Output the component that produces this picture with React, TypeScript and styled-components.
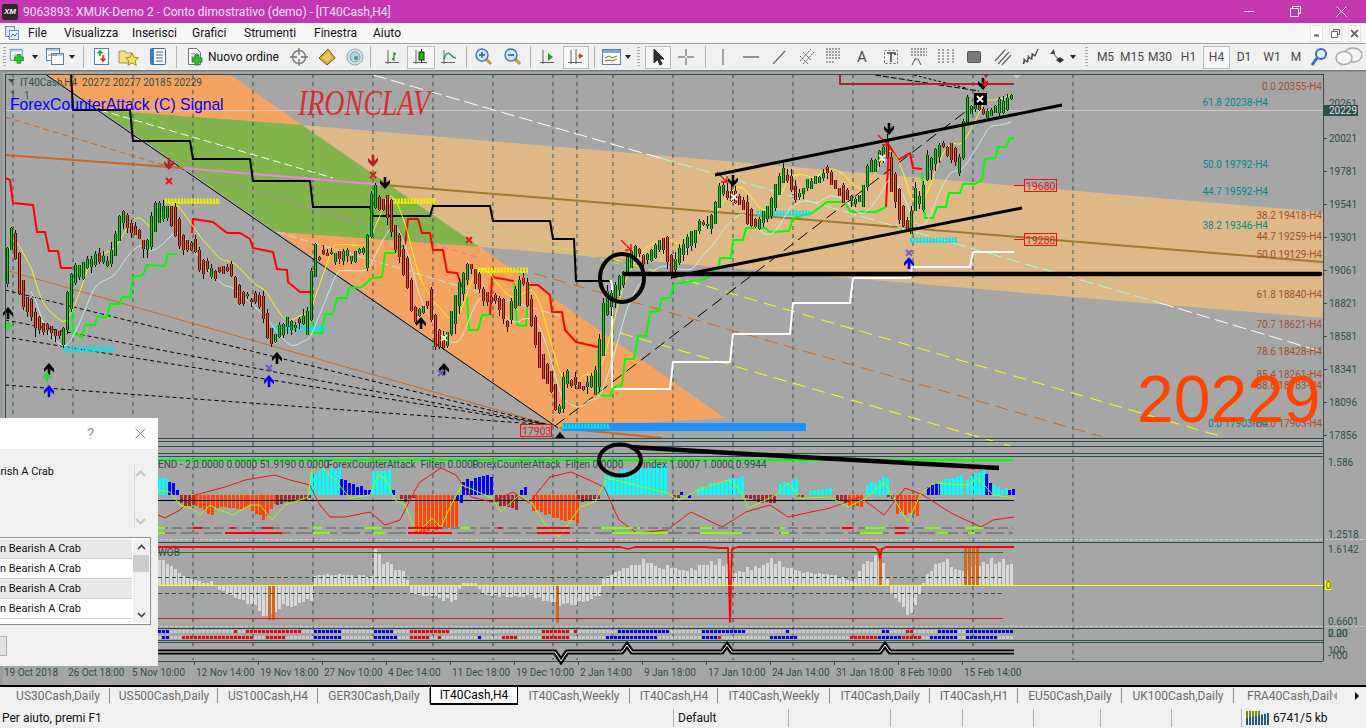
import React from "react";
import styled, { createGlobalStyle } from "styled-components";

const Global = createGlobalStyle`
  html, body { margin: 0; padding: 0; width: 1366px; height: 728px; overflow: hidden; background: #f0f0f0; }
  * { box-sizing: border-box; }
`;
const UI = `Roboto, "Liberation Sans", Arial, sans-serif`;
const ARIAL = `"Liberation Sans", Arial, sans-serif`;

const Page = styled.div`
  width: 1366px; height: 728px; display: flex; flex-direction: column;
  font-family: ${UI}; font-size: 12px; color: #000; overflow: hidden;
`;
const TitleBar = styled.header`
  height: 23px; background: #c437b0; display: flex; align-items: center; color: #fff; flex-shrink: 0; padding-right: 2px;
`;
const AppLogo = styled.div`
  width: 16px; height: 16px; margin: 0 5px 0 2px; background: #2a2a2a; border-radius: 2px; color: #fff;
  font: italic bold 8px ${ARIAL}; display: flex; align-items: center; justify-content: center;
`;
const TitleText = styled.div`
  flex: 1; font-size: 12px; color: #f4e4f2;
`;
const WinButton = styled.div`
  width: 46px; height: 21px; display: flex; align-items: center; justify-content: center;
`;
const MenuBar = styled.nav`
  height: 20px; background: #f7f7f7; display: flex; align-items: center; flex-shrink: 0;
`;
const MenuIcon = styled.div`
  width: 28px; padding-left: 4px; display: flex; align-items: center;
`;
const MenuItem = styled.span<{ $w: number }>`
  width: ${(p) => p.$w}px; font-size: 12px; color: #111;
`;
const MdiGroup = styled.div`
  margin-left: auto; display: flex; gap: 6px; padding-right: 5px;
`;
const MdiButton = styled.div`
  width: 13px; height: 17px; background: #fff; border: 1px solid #e4e4e4; display: flex; align-items: center; justify-content: center;
`;
const Toolbar = styled.div`
  height: 27px; background: #f0f0f0; border-top: 1px solid #a0a0a0; display: flex; align-items: center; flex-shrink: 0;
`;
const ToolSlot = styled.div<{ $w: number; $pressed?: boolean; $big?: boolean }>`
  width: ${(p) => p.$w}px; height: 23px; flex-shrink: 0; display: flex; align-items: center; justify-content: center;
  background: ${(p) => (p.$pressed ? "#f8f8f8" : "transparent")};
  border: 1px solid ${(p) => (p.$pressed ? "#bcbcbc" : "transparent")};
  font-size: ${(p) => (p.$big ? 15 : 12)}px; color: #4a4a4a; gap: 3px; white-space: nowrap;
`;
const OrderLabel = styled.span`
  color: #111; font-size: 12px;
`;
const Separator = styled.div`
  width: 1px; height: 22px; background: #b4b4b4;
`;
const Grip = styled.div`
  width: 3px; height: 20px;
  background: repeating-linear-gradient(to bottom, #a8a8a8 0 1px, transparent 1px 3px);
`;
const Caret = styled.div`
  width: 0; height: 0; border-left: 3px solid transparent; border-right: 3px solid transparent; border-top: 4px solid #222;
`;
const ChartArea = styled.main`
  position: relative; height: 615px; flex-shrink: 0; background: #a6a6a6; border-top: 1px solid #f0f0f0;
`;
const ChartCanvas = styled.svg`
  display: block; position: absolute; left: 0; top: -1px; width: 1366px; height: 615px;
`;
const AxisText = styled.text`
  font: 10px ${UI}; fill: #2f4f4f;
`;
const HeaderText = styled.text`
  font: 10px ${UI}; fill: #2f4f4f; white-space: pre;
`;
const SignalText = styled.text`
  font: 15.7px ${ARIAL}; fill: #0000ff;
`;
const FibText = styled.text<{ $teal?: boolean }>`
  font: 10px ${UI}; fill: ${(p) => (p.$teal ? "#008b8b" : "#a0522d")}; text-anchor: end;
`;
const PriceBoxText = styled.text`
  font: 10.5px ${UI}; fill: #e02020;
`;
const BigPrice = styled.text`
  font: 66px ${ARIAL}; fill: #ff4500;
`;
const ScrawlText = styled.text`
  font: italic 35px "Liberation Serif", serif; fill: #e01010; fill-opacity: .8;
`;
const Dialog = styled.aside`
  position: absolute; left: 0; top: 347px; width: 158px; height: 248px; background: #f0f0f0; display: flex; flex-direction: column;
`;
const DialogTitle = styled.div`
  height: 31px; background: #fff; display: flex; align-items: center; justify-content: flex-end; flex-shrink: 0; color: #8a8a8a;
`;
const HelpGlyph = styled.span`
  width: 49px; font-size: 15px; text-align: left; color: #9a9a9a;
`;
const CloseGlyph = styled.div`
  width: 23px; padding-right: 12px; display: flex; margin-left: -1px;
`;
const MessageRow = styled.div`
  height: 88px; display: flex; flex-shrink: 0;
`;
const MessageText = styled.div`
  width: 134px; padding: 16px 80px 0 0; display: flex; justify-content: flex-end; overflow: hidden; white-space: nowrap; font-size: 11px; color: #111;
`;
const MessageScroll = styled.div`
  width: 12px; margin-top: 15px; height: 65px; border-left: 1px solid #dcdcdc; display: flex; flex-direction: column; justify-content: space-between; align-items: center; padding: 6px 0 4px;
`;
const ListBox = styled.div`
  width: 151px; height: 88px; border: 1px solid #8c8c8c; border-left: 0; display: flex; background: #fff; flex-shrink: 0;
`;
const ListRows = styled.div`
  width: 132px; padding-top: 1px;
`;
const ListRow = styled.div<{ $odd: boolean }>`
  height: 20px; padding-right: 51px; display: flex; justify-content: flex-end; align-items: center; overflow: hidden; white-space: nowrap;
  font-size: 11px; color: #111; background: ${(p) => (p.$odd ? "#e9e9e9" : "#fff")}; border-bottom: 1px solid #cfcfcf;
`;
const ListScroll = styled.div`
  flex: 1; background: #f0f0f0; margin: 1px; display: flex; flex-direction: column; align-items: center; justify-content: space-between; padding: 5px 0;
`;
const ListThumb = styled.div`
  width: 100%; height: 17px; background: #cdcdcd; margin-bottom: auto; margin-top: 5px;
`;
const DialogButton = styled.div`
  width: 7px; height: 20px; margin-top: 11px; background: #e1e1e1; border: 1px solid #adadad; border-left: 0;
`;
const TabBar = styled.div`
  height: 21px; background: #f0f0f0; border-top: 2px solid #000; display: flex; align-items: flex-start; flex-shrink: 0; position: relative; padding-left: 6px;
`;
const Tab = styled.div<{ $active?: boolean; $w: number }>`
  width: ${(p) => p.$w}px; height: ${(p) => (p.$active ? 20 : 15)}px; margin-top: ${(p) => (p.$active ? "-2px" : "1px")}; flex-shrink: 0;
  display: flex; align-items: center; justify-content: center; white-space: nowrap; overflow: hidden;
  color: ${(p) => (p.$active ? "#000" : "#6b6b6b")}; background: ${(p) => (p.$active ? "#fff" : "transparent")};
  border-left: 1px solid ${(p) => (p.$active ? "#000" : "transparent")};
  border-right: 1px solid ${(p) => (p.$active ? "#000" : "#8a8a8a")};
  border-bottom: ${(p) => (p.$active ? "2px solid #000" : "0")};
  border-top: ${(p) => (p.$active ? "2px solid #000" : "0")};
  font-size: 12px;
`;
const LastTab = styled(Tab)`
  justify-content: flex-start; padding-left: 12px; border-right: 0;
`;
const TabArrows = styled.div`
  position: absolute; right: 7px; top: 1px; width: 26px; height: 15px; display: flex; justify-content: space-between; align-items: center; background: #f0f0f0;
`;
const TabArrow = styled.div<{ $dir: "l" | "r"; $on?: boolean }>`
  width: 0; height: 0; border-top: 4px solid transparent; border-bottom: 4px solid transparent;
  ${(p) => (p.$dir === "l" ? `border-right: 4px solid ${p.$on ? "#000" : "#a0a0a0"};` : `border-left: 4px solid ${p.$on ? "#000" : "#a0a0a0"};`)}
`;
const StatusBar = styled.footer`
  height: 22px; background: #f0f0f0; display: flex; align-items: center; flex-shrink: 0; font-size: 12px; color: #111; padding-top: 2px;
`;
const StatusCell = styled.div<{ $w: number; $plain?: boolean }>`
  width: ${(p) => p.$w}px; height: 18px; flex-shrink: 0; padding-left: ${(p) => (p.$plain ? 2 : 4)}px; display: flex; align-items: center; gap: 4px; white-space: nowrap;
  border-left: ${(p) => (p.$plain ? "0" : "1px solid #b0b0b0")};
`;

/* ---------- toolbar icons ---------- */
const Ico = ({ children, w = 18, h = 18 }: { children: React.ReactNode; w?: number; h?: number }) => (
  <svg width={w} height={h} viewBox={`0 0 ${w} ${h}`}>{children}</svg>
);
const Win = ({ x = 1, y = 1, w = 13, h = 12 }: any) => (
  <>
    <rect x={x + 0.5} y={y + 0.5} width={w} height={h} fill="#fff" stroke="#5f7f9f" />
    <rect x={x + 1} y={y + 1} width={w - 1} height={2} fill="#b5cbe6" />
  </>
);
const Plus = ({ x = 9, y = 9 }: any) => (
  <path d={`M${x + 3} ${y}h4v3h3v4h-3v3h-4v-3h-3v-4h3z`} transform="translate(-1 -1)" fill="#30c030" stroke="#0c7a0c" strokeWidth=".8" />
);
const AxisL = ({ children }: { children?: React.ReactNode }) => (
  <Ico>
    <path d="M4 2v14M1 14.5h14" stroke="#606060" fill="none" />
    {children}
  </Ico>
);
const icons: Record<string, React.ReactNode> = {
  newChart: <Ico w={20} h={20}><Win /><path d="M4 8h8M7 6v5" stroke="#7a9a" /><Plus x={7} y={8} /></Ico>,
  profile: <Ico w={20} h={20}><Win x={1} y={1} /><Win x={6} y={6} w={12} h={11} /><path d="M3 8h9" stroke="#788" /></Ico>,
  market: <Ico w={20} h={20}><rect x="2.5" y="1.5" width="14" height="16" fill="#fff" stroke="#5f7f9f" /><path d="M8 4v5M5.5 6.5 8 4l2.5 2.5" stroke="#2a9a2a" fill="none" strokeWidth="1.6" /><path d="M11 8v6M8.5 11.5 11 14l2.5-2.5" stroke="#d83020" fill="none" strokeWidth="1.6" /></Ico>,
  star: <Ico w={24} h={20}><path d="M2 4h6l1 2h6v10H2z" fill="#f4df90" stroke="#a89050" /><path d="M15 6l2 4.300 4.500.5-3.300 3 1 4.500-4.200-2.400-4 2.400 1-4.500-3.300-3 4.500-.5z" fill="#f7e060" stroke="#a88820" /></Ico>,
  navigator: <Ico w={20} h={20}><rect x="2.500" y="1.500" width="15" height="16" rx="1" fill="#fff" stroke="#3a6ea5" /><rect x="3" y="2" width="3" height="15" fill="#3f7fc4" /><path d="M8 5h7M8 8h7M8 11h7M8 14h7" stroke="#557" /></Ico>,
  order: <Ico w={18} h={20}><path d="M1.500 1.500h8l4 4v12h-12z" fill="#fff" stroke="#707070" /><path d="M4 7h7M4 10h4" stroke="#808080" /><Plus x={6} y={9} /></Ico>,
  cross: <Ico w={20} h={20}><circle cx="10" cy="10" r="6.500" fill="none" stroke="#808080" strokeWidth="1.500" /><path d="M10 1v7M10 12v7M1 10h7M12 10h7" stroke="#707070" strokeWidth="1.300" /></Ico>,
  gold: <Ico w={20} h={20}><path d="M2 11 11 2l7 9-8 7z" fill="#dba83a" stroke="#7a5a18" /><path d="M5 11l6-6 4 6-5 4z" fill="#efc45f" /></Ico>,
  radio: <Ico w={20} h={20}><circle cx="10" cy="10" r="8" fill="#cfe0ea" stroke="#8fa8b8" /><circle cx="10" cy="10" r="5" fill="#b6d4e0" stroke="#7d9db0" /><circle cx="11" cy="11" r="2" fill="#2f9f8f" /></Ico>,
  bar: <AxisL><path d="M10 4v9M8 11h2M10 6h2" stroke="#2a8a2a" strokeWidth="1.300" fill="none" /></AxisL>,
  candle: <AxisL><path d="M9.500 1v14" stroke="#222" /><rect x="7" y="4" width="5" height="8" fill="#18c018" stroke="#222" /></AxisL>,
  line: <AxisL><path d="M4 11c2-6 4-7 6-5s3 4 6 4" stroke="#2a8a4a" fill="none" strokeWidth="1.300" /></AxisL>,
  zoomIn: <Ico w={20} h={20}><path d="M11.500 11.500l5.500 5.500" stroke="#c09a2a" strokeWidth="3" /><circle cx="8" cy="8" r="6" fill="#cfe6fa" stroke="#3a7ab8" strokeWidth="1.400" /><path d="M5 8h6M8 5v6" stroke="#2a5a98" strokeWidth="1.500" /></Ico>,
  zoomOut: <Ico w={20} h={20}><path d="M11.500 11.500l5.500 5.500" stroke="#c09a2a" strokeWidth="3" /><circle cx="8" cy="8" r="6" fill="#cfe6fa" stroke="#3a7ab8" strokeWidth="1.400" /><path d="M5 8h6" stroke="#2a5a98" strokeWidth="1.500" /></Ico>,
  auto: <AxisL><path d="M9 5l5 4-5 4z" fill="#28a028" /></AxisL>,
  shift: <AxisL><path d="M9 1v15" stroke="#606060" /><path d="M16 8l-4-3v6z" fill="#d04020" /><path d="M11 8h5" stroke="#d04020" /></AxisL>,
  template: <Ico w={22} h={20}><rect x="1.500" y="2.500" width="18" height="15" fill="#fff" stroke="#5f7f9f" /><rect x="2" y="3" width="17" height="3" fill="#7fa8d8" /><path d="M4 11l4-2 3 2 5-2" stroke="#2a9a2a" fill="none" /><path d="M4 14l4-1 3 1 5-2" stroke="#d04020" fill="none" /></Ico>,
  cursor: <Ico><path d="M5 1v14l3.500-3.500 2.500 5.500 2-1-2.500-5H15z" fill="#333" stroke="#222" /></Ico>,
  crosshair: <Ico><path d="M9 1v7M9 10v7M1 9h7M10 9h7" stroke="#555" /></Ico>,
  vline: <Ico><path d="M9 1v16" stroke="#555" /></Ico>,
  hline: <Ico><path d="M1 9h16" stroke="#555" strokeWidth="1.200" /></Ico>,
  trend: <Ico><path d="M3 16 15 3" stroke="#666" strokeWidth="1.200" /></Ico>,
  equi: <Ico w={20} h={20}><path d="M3 14 14 2M6 17 17 5M3 9l8 8M6 5l8 8" stroke="#555" strokeDasharray="2 1" fill="none" /></Ico>,
  fibo: <Ico w={20} h={20}><path d="M2 2h14M2 5h14M2 8h14M2 11h14M2 15h8" stroke="#555" strokeDasharray="2 1" /></Ico>,
  label: <Ico><rect x="2.500" y="2.500" width="13" height="13" fill="none" stroke="#666" strokeDasharray="2 2" /><path d="M5 5h8v2M9 5v9" stroke="#444" strokeWidth="1.600" fill="none" /></Ico>,
  fan: <Ico w={20} h={20}><path d="M2 2h16M2 5h16M2 8h16" stroke="#555" strokeDasharray="2 1" /><path d="M3 18l3-6h3l3 6" stroke="#555" fill="none" /></Ico>,
  ftime: <Ico w={20} h={20}><path d="M3 2v14M7 2v14M12 2v14M17 2v14" stroke="#555" strokeDasharray="2 1" /></Ico>,
  rect: <Ico><rect x="2.500" y="3.500" width="13" height="11" rx="1" fill="#7a7a7a" stroke="#555" /></Ico>,
  channel: <Ico w={20} h={20}><path d="M2 14 12 3M5 17 16 5M9 18 18 8" stroke="#666" strokeWidth="1.300" /></Ico>,
  gann: <Ico w={20} h={20}><path d="M2 17l2-4 2 2 2-5 2 2 2-5 2 2 3-7" stroke="#444" fill="none" strokeWidth="1.200" /><path d="M3 11v6M7 8v7M11 6v7" stroke="#444" /></Ico>,
  arrows: <Ico w={20} h={20}><path d="M4 7l4-5 1 5z" fill="#444" /><path d="M6 5l7 8" stroke="#444" /><path d="M10 13l4-3 4 3-4 3z" fill="#333" /></Ico>,
  search: <Ico w={20} h={20}><path d="M8 11 3 18" stroke="#2f6fc0" strokeWidth="3" /><circle cx="12" cy="7" r="5" fill="#e8f2ff" stroke="#2f6fc0" strokeWidth="2" /></Ico>,
  chat: <Ico w={30} h={20}><ellipse cx="19" cy="8" rx="9" ry="7" fill="#f4f4f4" stroke="#a8a8a8" strokeWidth="1.400" /><ellipse cx="10" cy="11" rx="8" ry="6.500" fill="#f8f8f8" stroke="#a8a8a8" strokeWidth="1.400" /><path d="M7 17l-1 3 4-3z" fill="#bbb" /></Ico>,
};

type Slot =
  | { k: "grip" | "sep" | "caret" | "gap"; w: number }
  | { k: "icon"; w: number; i: string; p?: boolean }
  | { k: "text"; w: number; t: string; p?: boolean; big?: boolean }
  | { k: "order"; w: number };

const slots: Slot[] = [
  { k: "grip", w: 8 }, { k: "icon", w: 20, i: "newChart" }, { k: "caret", w: 14 },
  { k: "icon", w: 26, i: "profile" }, { k: "caret", w: 8 }, { k: "sep", w: 14 },
  { k: "icon", w: 24, i: "market" }, { k: "icon", w: 30, i: "star" }, { k: "icon", w: 28, i: "navigator" },
  { k: "sep", w: 8 }, { k: "order", w: 106 }, { k: "icon", w: 26, i: "cross" }, { k: "icon", w: 30, i: "gold" },
  { k: "icon", w: 26, i: "radio" }, { k: "sep", w: 4 }, { k: "gap", w: 7 },
  { k: "icon", w: 28, i: "bar" }, { k: "icon", w: 28, i: "candle", p: true }, { k: "icon", w: 28, i: "line" },
  { k: "sep", w: 6 }, { k: "icon", w: 30, i: "zoomIn" }, { k: "icon", w: 28, i: "zoomOut" }, { k: "sep", w: 6 },
  { k: "icon", w: 30, i: "auto" }, { k: "icon", w: 26, i: "shift", p: true }, { k: "sep", w: 11 },
  { k: "icon", w: 24, i: "template" }, { k: "caret", w: 7 }, { k: "grip", w: 14 },
  { k: "icon", w: 26, i: "cursor", p: true }, { k: "icon", w: 30, i: "crosshair" }, { k: "sep", w: 8 },
  { k: "icon", w: 28, i: "vline" }, { k: "icon", w: 28, i: "hline" }, { k: "icon", w: 28, i: "trend" },
  { k: "icon", w: 27, i: "equi" }, { k: "icon", w: 28, i: "fibo" }, { k: "text", w: 28, t: "A", big: true },
  { k: "icon", w: 29, i: "label" }, { k: "icon", w: 27, i: "fan" }, { k: "icon", w: 28, i: "ftime" },
  { k: "icon", w: 28, i: "rect" }, { k: "icon", w: 29, i: "channel" }, { k: "icon", w: 28, i: "gann" },
  { k: "icon", w: 22, i: "arrows" }, { k: "caret", w: 12 }, { k: "grip", w: 14 },
  { k: "text", w: 25, t: "M5" }, { k: "text", w: 28, t: "M15" }, { k: "text", w: 28, t: "M30" }, { k: "text", w: 29, t: "H1" },
  { k: "text", w: 27, t: "H4", p: true }, { k: "text", w: 28, t: "D1" }, { k: "text", w: 28, t: "W1" }, { k: "text", w: 20, t: "M" },
  { k: "icon", w: 25, i: "search" }, { k: "icon", w: 35, i: "chat" },
];

const renderSlot = (s: Slot, i: number) => {
  switch (s.k) {
    case "grip": return <ToolSlot key={i} $w={s.w}><Grip /></ToolSlot>;
    case "sep": return <ToolSlot key={i} $w={s.w}><Separator /></ToolSlot>;
    case "caret": return <ToolSlot key={i} $w={s.w}><Caret /></ToolSlot>;
    case "gap": return <ToolSlot key={i} $w={s.w} />;
    case "icon": return <ToolSlot key={i} $w={s.w} $pressed={s.p}>{icons[s.i]}</ToolSlot>;
    case "text": return <ToolSlot key={i} $w={s.w} $pressed={s.p} $big={s.big}>{s.t}</ToolSlot>;
    case "order": return <ToolSlot key={i} $w={s.w}>{icons.order}<OrderLabel>Nuovo ordine</OrderLabel></ToolSlot>;
  }
};

/* ---------- chart data ---------- */
const pricePath: number[][] = [
  [5,280],[13,227],[17,260],[25,303],[40,323],[49,330],[63,337],[73,277],[97,260],[110,260],[123,217],[133,230],[147,247],[157,210],[170,210],[182,243],[193,243],[203,267],[220,273],[230,270],[240,297],[260,297],[267,323],[273,340],[283,327],[310,320],[313,257],[333,253],[350,257],[367,250],[373,197],[387,203],[397,243],[410,283],[413,317],[430,303],[437,340],[447,337],[462,287],[470,263],[483,293],[500,303],[507,320],[517,297],[524,283],[534,327],[541,360],[553,387],[560,417],[565,380],[581,387],[596,380],[601,347],[605,310],[614,293],[626,270],[638,247],[645,260],[662,240],[672,267],[686,247],[701,223],[710,227],[722,190],[734,197],[746,213],[757,230],[772,203],[786,173],[796,193],[806,187],[827,173],[834,187],[844,197],[862,203],[865,177],[877,160],[889,147],[891,177],[898,203],[905,220],[910,237],[913,203],[922,200],[927,170],[941,147],[953,157],[961,163],[965,113],[974,107],[985,113],[996,107],[1010,100],
];
const interp = (pts: number[][], x: number) => {
  if (x <= pts[0][0]) return pts[0][1];
  for (let i = 1; i < pts.length; i++) {
    if (x <= pts[i][0]) {
      const [a, b] = [pts[i - 1], pts[i]];
      return a[1] + ((b[1] - a[1]) * (x - a[0])) / (b[0] - a[0] || 1);
    }
  }
  return pts[pts.length - 1][1];
};
const rnd = (n: number) => {
  const v = Math.sin(n * 12.9898 + 4.1) * 43758.5453;
  return v - Math.floor(v);
};
const candles = Array.from({ length: 252 }, (_, i) => {
  const x = 7 + 4 * i;
  const center = interp(pricePath, x) + (rnd(i) - 0.5) * 8;
  const slope = interp(pricePath, x + 4) - interp(pricePath, x - 4);
  const half = 1 + rnd(i + 300) * rnd(i + 301) * 7 + Math.abs(slope) * 0.35;
  const rising = slope < -3 ? true : slope > 3 ? false : rnd(i + 77) > 0.5;
  const open = rising ? center + half : center - half;
  const close = rising ? center - half : center + half;
  const top = center - half - rnd(i + 600) * rnd(i + 601) * 9;
  const bot = center + half + rnd(i + 900) * rnd(i + 901) * 10;
  return { x, open, close, top, bot };
});
const mid = candles.map((c) => interp(pricePath, c.x));
const sma = (i: number, n: number) => {
  let s = 0, c = 0;
  for (let j = Math.max(0, i - n + 1); j <= i; j++) { s += mid[j]; c++; }
  return s / c;
};
const yellowMA = candles.map((c, i) => `${c.x},${(sma(i, 6) - 10).toFixed(1)}`).join(" ");
const cyanMA = candles.slice(6).map((c, i) => `${c.x},${(sma(i + 6, 7) + 16).toFixed(1)}`).join(" ");

const P = (a: number[][]) => a.map((p) => p.join(",")).join(" ");

const redSteps = [
  [[5,178],[10,180],[13,203],[33,205],[37,232],[45,232],[49,251],[58,251],[61,268],[72,268]],
  [[192,233],[193,219],[213,222],[227,233],[240,233],[250,239],[253,248],[273,252],[277,269],[287,270],[288,282],[300,292],[310,292]],
  [[405,245],[408,219],[418,219],[422,233],[430,233],[433,250],[443,250],[447,272],[457,273],[462,287]],
  [[490,315],[492,277],[514,281]],
  [[529,285],[538,285],[550,295],[552,312],[562,312],[565,330],[576,342],[598,347]],
  [[886,207],[889,145],[898,160],[910,153],[913,168],[922,169]],
];
const greenSteps = [
  [[72,297],[73,333],[82,337],[85,325],[95,325],[97,317],[107,317],[110,304],[120,304],[122,297],[130,297],[133,277],[143,275],[147,265],[165,266],[168,254],[177,254]],
  [[310,293],[313,333],[322,333],[325,314],[333,314],[337,298],[347,298],[349,288],[362,287],[372,278],[382,277],[385,253],[395,253],[397,247],[405,246]],
  [[467,297],[469,330],[478,330],[482,315],[490,315]],
  [[514,283],[517,325],[526,326],[529,285]],
  [[598,350],[600,395],[610,396],[614,387],[622,385],[625,359],[634,359],[638,336],[646,336],[650,312],[659,311],[662,298],[670,298],[674,284],[705,279],[719,267],[720,258],[731,258],[733,240],[743,240],[746,228],[765,228],[770,232],[789,231],[793,218],[812,213],[827,202],[844,202],[851,212],[875,212],[886,207]],
  [[922,173],[925,218],[933,218],[937,207],[946,207],[949,193],[960,193],[963,184],[975,184],[982,180],[985,159],[995,158],[998,147],[1006,147],[1010,138],[1014,138]],
];
const blackStep = [[71,74],[73,110],[130,110],[133,141],[190,141],[193,159],[250,159],[253,181],[310,181],[313,207],[370,207],[373,216],[430,216],[433,206],[490,206],[493,221],[550,221],[553,239],[574,239],[576,281],[610,281]];
const whiteStep = [[610,280],[612,283],[612,386],[614,389],[670,389],[673,362],[730,362],[733,334],[790,334],[793,303],[850,303],[853,278],[910,278],[912,267],[970,267],[973,252],[1014,252]];

const gridX = [13,73,133,193,253,313,373,433,493,553,577,613,673,733,793,853,913,973,1073];
const fibs: [string, number][] = [
  ["0.0 20355-H4",90],["38.2 19418-H4",219],["44.7 19259-H4",240],["50.0 19129-H4",258],["61.8 18840-H4",298],["70.7 18621-H4",328],["78.6 18428-H4",355],["85.4 18261-H4",378],["88.6 18183-H4",389],["100.0 17903-H4",427],
];
const tealFibs: [string, number][] = [
  ["61.8 20238-H4",106],["50.0 19792-H4",168],["44.7 19592-H4",195],["38.2 19346-H4",229],["0.0 17903-H4",427],
];
const axis: [string, number][] = [["20021",138],["19781",171],["19541",204],["19301",237],["19061",270],["18821",303],["18581",336],["18341",369],["18096",402],["17856",435]];
const times = ["19 Oct 2018","26 Oct 18:00","5 Nov 10:00","12 Nov 14:00","19 Nov 18:00","27 Nov 10:00","4 Dec 14:00","11 Dec 18:00","19 Dec 10:00","2 Jan 14:00","9 Jan 18:00","17 Jan 10:00","24 Jan 14:00","31 Jan 18:00","8 Feb 10:00","15 Feb 14:00"];

const Arrow = ({ x, y, up, color, size = 1 }: { x: number; y: number; up?: boolean; color: string; size?: number }) => (
  <g transform={`translate(${x} ${y}) scale(${size} ${up ? -size : size})`}>
    <path d="M-1.300 -7h2.600v6l3.700-3.500v3.500L0 5-5-.5v-3.500l3.700 3.500z" fill={color} />
  </g>
);
const Cross = ({ x, y, color }: { x: number; y: number; color: string }) => (
  <path d={`M${x - 3} ${y - 3}l6 6M${x + 3} ${y - 3}l-6 6`} stroke={color} strokeWidth="1.800" fill="none" />
);
const DiagArrow = ({ x, y }: { x: number; y: number }) => (
  <path d={`M${x - 8} ${y - 7}l10 10M${x + 2} ${y - 3}v6h-6`} stroke="#f01010" strokeWidth="1.400" fill="none" />
);
const Zig = ({ x0, x1, y, color }: { x0: number; x1: number; y: number; color: string }) => (
  <>
    <line x1={x0} x2={x1} y1={y} y2={y} stroke={color} strokeWidth="5" strokeDasharray="2 1.200" />
    <line x1={x0} x2={x1} y1={y + 2} y2={y + 2} stroke={color} strokeWidth="1" />
  </>
);
const Dash = ({ d, color, w = 1, dash = "6 4" }: { d: string; color: string; w?: number; dash?: string }) => (
  <path d={d} stroke={color} strokeWidth={w} strokeDasharray={dash} fill="none" />
);
const Poly = ({ pts, color, w = 1 }: { pts: number[][]; color: string; w?: number }) => (
  <polyline points={P(pts)} stroke={color} strokeWidth={w} fill="none" strokeLinejoin="round" />
);

/* subwindow 2 histogram */
const C = "#00ffff", B = "#0000ff", O = "#ff4500", M = "#a52a2a";
const hSeg: [number, number, number, number, string][] = [
  [158,168,15,16,C],[168,178,14,4,B],[180,195,-9,-10,M],[195,212,-12,-20,O],[212,247,-12,-13,O],[247,262,-12,-22,O],[262,276,-25,-8,O],[276,310,-10,-4,M],[310,340,22,28,C],[340,370,15,4,B],[372,392,22,25,C],[392,396,4,4,B],[400,415,-5,-5,M],[415,456,-38,-32,O],[456,462,-6,-8,B],[462,492,14,20,B],[495,516,-8,-14,M],[520,528,7,6,B],[532,577,-16,-28,O],[577,600,-6,-3,M],[604,667,22,30,C],[673,680,-3,-4,M],[680,691,2,-2,B],[697,742,7,20,C],[745,776,-4,-9,M],[779,797,12,15,C],[797,805,-4,-4,M],[809,830,5,6,C],[836,848,-4,-8,M],[848,863,-10,-11,O],[866,887,10,18,C],[887,892,-3,-3,M],[896,920,-18,-22,O],[927,940,8,12,B],[940,963,14,20,C],[966,984,16,27,C],[985,990,20,10,B],[993,1008,8,6,C],[1008,1014,5,3,B],
];
const histBars: { x: number; h: number; c: string }[] = [];
hSeg.forEach(([a, b, h0, h1, c]) => {
  for (let x = a; x < b; x += 4) {
    const t = (x - a) / Math.max(1, b - a);
    histBars.push({ x, h: Math.round(h0 + (h1 - h0) * t + (rnd(x) - 0.5) * 4), c });
  }
});
const redOsc = [[158,515],[165,518],[180,510],[195,495],[225,487],[245,480],[275,475],[290,480],[310,485],[312,490],[320,505],[330,517],[345,517],[370,512],[385,525],[400,520],[415,490],[420,482],[441,468],[456,475],[471,497],[492,502],[513,492],[529,503],[550,477],[571,472],[589,480],[604,487],[619,520],[637,533],[667,530],[691,512],[722,527],[746,512],[770,505],[788,517],[830,508],[860,497],[884,515],[905,488],[923,495],[951,513],[981,527],[993,520],[1014,517]];
const greenOsc = [[158,490],[170,492],[180,505],[195,510],[200,515],[210,505],[215,508],[233,515],[250,505],[260,505],[272,520],[285,505],[308,497],[312,470],[320,465],[335,480],[350,498],[370,495],[378,475],[385,478],[395,500],[405,505],[415,530],[420,530],[432,518],[441,527],[450,507],[462,485],[492,498],[501,512],[519,495],[532,503],[544,523],[559,537],[580,507],[595,502],[607,478],[667,493],[679,500],[703,488],[728,480],[740,490],[749,508],[776,495],[788,483],[800,498],[830,497],[848,507],[866,498],[884,482],[908,522],[920,495],[933,483],[969,485],[978,478],[993,495],[1014,498]];

const row1 = { g: [[158,165],[313,322],[365,382],[460,470],[601,632],[637,640],[700,712],[780,785],[865,885],[925,940],[965,982]], r: [[193,202],[230,235],[262,273],[408,442],[498,502],[537,570],[842,853],[895,908]] };
const row2 = { g: [[158,165],[313,330],[373,385],[612,668],[700,742],[781,789],[860,883],[938,948],[968,975]], r: [[225,282],[408,452],[537,570],[895,905]] };

/* subwindow 3 */
const vKeys = [[158,25],[165,24],[180,10],[195,5],[204,1],[212,5],[216,-5],[255,-20],[262,-30],[280,-22],[310,-15],[312,10],[370,9],[373,32],[395,15],[405,12],[408,-10],[420,-10],[456,-17],[459,2],[474,2],[480,-8],[510,-13],[528,-10],[560,-22],[601,-10],[602,6],[640,24],[680,14],[720,24],[733,12],[770,24],[800,14],[840,8],[852,3],[866,24],[880,28],[889,-6],[908,-30],[920,-6],[924,10],[940,27],[963,12],[980,24],[1011,22]];
const volBars = Array.from({ length: 214 }, (_, i) => {
  const x = 158 + 4 * i;
  return { x, h: Math.round(interp(vKeys, x) * (0.85 + rnd(x + 50) * 0.3)) };
});
const orangeVol = [[268,-35],[272,-35],[556,-38],[879,37],[964,38],[968,38],[972,38],[976,38]];

/* subwindow 4 */
const sq = (segs: [number, number, string][], xx: number) => {
  for (const s of segs) if (xx >= s[0] && xx < s[1]) return s[2];
  return "#c8c8c8";
};
const R = "#ff0000", BL = "#0000ff";
const sq1: [number, number, string][] = [[158,168,BL],[232,236,R],[244,300,R],[312,340,BL],[372,392,BL],[408,450,R],[540,570,R],[574,578,R],[616,670,BL],[700,743,BL],[783,790,BL],[880,887,BL],[904,912,R],[935,955,BL],[963,1012,BL]];
const sq2: [number, number, string][] = [[160,170,BL],[180,252,R],[264,285,R],[312,340,BL],[372,395,BL],[408,430,R],[436,442,R],[476,480,BL],[500,515,R],[540,570,R],[604,655,BL],[700,716,BL],[716,720,R],[770,797,BL],[850,876,R],[876,900,BL],[900,920,R],[927,955,BL],[963,995,BL]];

const Chart = () => (
  <ChartCanvas viewBox="0 70 1366 615">
    <rect x="0" y="70" width="1366" height="615" fill="#a6a6a6" />
    <rect x="0" y="70" width="1366" height="1.500" fill="#7d7d7d" />
    <rect x="0" y="71" width="3" height="614" fill="#9a9a9a" />

    {/* fan zones */}
    <polygon points="45,74 229,74 302,125 100,110" fill="#f4a460" />
    <polygon points="100,110 302,125 480,247 277,232" fill="#82b44e" />
    <polygon points="277,232 480,247 725,418 558,428" fill="#f4a460" />
    <polygon points="302,125 1323,212 1323,318 480,247" fill="#deb887" />

    {/* grid */}
    {gridX.map((x) => (
      <line key={x} x1={x} x2={x} y1="74" y2="660" stroke="#2f4f4f" strokeWidth="1" strokeDasharray="4 4" />
    ))}
    <line x1="5" x2="1323" y1="110.500" y2="110.500" stroke="#c8c8c8" />

    {/* fan rays */}
    <line x1="45" y1="74" x2="558" y2="428" stroke="#000" />
    <Poly pts={[[5,155],[183,168]]} color="#cc6622" w={2} />
    <Poly pts={[[183,168],[385,185]]} color="#ee82ee" w={2} />
    <Poly pts={[[385,185],[1323,262]]} color="#a07a30" w={2} />
    <Dash d="M5 117 163 165" color="#d2691e" />
    <Dash d="M183 170 480 258" color="#c878e0" />
    <Dash d="M100 110 333 178" color="#ffffff" dash="8 4" />
    <Dash d="M277 232 560 316" color="#b8e4e0" dash="8 4" />
    <Dash d="M373 75 660 158" color="#ffffff" dash="14 5" />
    <Dash d="M660 158 1160 303" color="#a0ffe8" dash="14 5" />
    <Dash d="M1160 303 1323 352" color="#ffffff" dash="14 5" />
    <Dash d="M427 210 640 270" color="#b4e060" dash="8 4" />
    <line x1="5" y1="270" x2="550" y2="425" stroke="#d2691e" />
    {[290, 320, 337, 385].map((y) => (
      <Dash key={y} d={`M5 ${y} 550 425`} color="#000" dash="4 3" />
    ))}
    <Dash d="M610 258 1223 437" color="#ffff00" dash="13 7" />
    <Dash d="M620 333 1010 446" color="#ffff00" dash="13 7" />
    <Dash d="M515 268 1103 437" color="#d2691e" dash="13 7" />
    <Poly pts={[[560,428],[662,438]]} color="#c86a28" w={2} />
    <Dash d="M555 426 965 112" color="#000" dash="12 6" />
    <Dash d="M875 75 979 91" color="#000" dash="6 2" />
    <Dash d="M914 75 966 88" color="#000" dash="3 2" />
    <Poly pts={[[840,74],[840,84],[1014,84]]} color="#b22222" w={2} />

    {/* thick step lines */}
    <Poly pts={blackStep} color="#000" w={2} />
    <Poly pts={whiteStep} color="#fff" w={2} />
    <rect x="562" y="423" width="244" height="8" fill="#1e90ff" />

    {/* indicator steps */}
    {redSteps.map((s, i) => <Poly key={i} pts={s} color="#ff0000" w={2} />)}
    {greenSteps.map((s, i) => <Poly key={i} pts={s} color="#00ff00" w={2} />)}

    {/* zigzag signal runs */}
    <Zig x0={63} x1={115} y={349} color="#00e5ee" />
    <Zig x0={272} x1={327} y={328} color="#00e5ee" />
    <Zig x0={562} x1={610} y={426} color="#00e5ee" />
    <Zig x0={757} x1={810} y={213} color="#00e5ee" />
    <Zig x0={910} x1={958} y={240} color="#00e5ee" />
    <Zig x0={165} x1={220} y={201} color="#f0f000" />
    <Zig x0={385} x1={435} y={201} color="#f0f000" />
    <Zig x0={475} x1={528} y={270} color="#f0f000" />

    {/* moving averages */}
    <polyline points={yellowMA} stroke="#ffff00" strokeWidth=".9" fill="none" />
    <polyline points={cyanMA} stroke="#c6efef" strokeWidth=".9" fill="none" />

    {/* candles */}
    <g shapeRendering="crispEdges">
      {candles.map((c) => {
        const t = Math.round(Math.min(c.open, c.close));
        const b = Math.round(Math.max(c.open, c.close));
        const h = Math.max(2, b - t);
        return (
          <g key={c.x}>
            <rect x={c.x} y={c.top} width="1" height={c.bot - c.top} fill="#000" />
            <rect x={c.x - 1} y={t} width="3" height={h} fill={c.close < c.open ? "#00d800" : "#ff4500"} />
            <rect x={c.x - 1} y={t} width="1" height={h} fill="#000" fillOpacity=".7" />
            <rect x={c.x + 1} y={t} width="1" height={h} fill="#000" fillOpacity=".7" />
          </g>
        );
      })}
    </g>

    {/* markers */}
    <Arrow x={169} y={165} color="#b22222" /><Cross x={169} y={181} color="#f01010" />
    <Arrow x={373} y={162} color="#b22222" /><Cross x={373} y={175} color="#f01010" />
    <Arrow x={385} y={184} color="#000" /><Cross x={469} y={240} color="#f01010" />
    <Arrow x={49} y={368} up color="#000" /><Arrow x={47} y={376} up color="#22e022" size={.8} /><Arrow x={49} y={390} up color="#0000ff" />
    <Arrow x={277} y={357} up color="#000" /><Cross x={269} y={368} color="#6a5acd" /><Arrow x={269} y={380} up color="#0000ff" />
    <Arrow x={421} y={322} up color="#000" /><Cross x={444} y={338} color="#ffffff" /><Arrow x={444} y={368} up color="#000" /><Cross x={441} y={373} color="#6a5acd" />
    <Arrow x={8} y={312} up color="#000" /><Arrow x={8} y={325} up color="#22e022" size={.8} />
    <DiagArrow x={629} y={247} /><DiagArrow x={725} y={179} /><Arrow x={733} y={182} color="#000" /><Cross x={734} y={197} color="#fff" />
    <Arrow x={889} y={130} color="#000" /><DiagArrow x={886} y={142} /><Cross x={882} y={158} color="#fff" />
    <Cross x={909} y={253} color="#6a5acd" /><Arrow x={909} y={262} up color="#0000ff" />
    <Arrow x={983} y={85} color="#000" /><Arrow x={985} y={84} color="#ff1010" size={.6} />
    <rect x="974" y="93" width="13" height="12" fill="#000" />
    <Cross x={980} y={99} color="#fff" />
    <path d="M983 74h6l-3 4z" fill="#b22222" /><path d="M1012 74h10l-5 5z" fill="#c8c8c8" />
    <path d="M555 438l5-6 5 6z" fill="#000" />

    {/* hand trend lines */}
    <Poly pts={[[715,175],[1062,105]]} color="#000" w={3} />
    <Poly pts={[[672,277],[1022,208]]} color="#000" w={3} />
    <line x1="625" x2="1320" y1="274" y2="274" stroke="#000" strokeWidth="4.500" strokeLinecap="round" />
    <ellipse cx="622" cy="278" rx="22" ry="24" stroke="#000" strokeWidth="4" fill="none" />

    {/* price tags */}
    <line x1="1014" x2="1024" y1="185.500" y2="185.500" stroke="#f01010" />
    <rect x="1024.500" y="179.500" width="32" height="12" fill="none" stroke="#f01010" />
    <PriceBoxText x="1026" y="189.500">19680</PriceBoxText>
    <line x1="1014" x2="1024" y1="239.500" y2="239.500" stroke="#f01010" />
    <rect x="1024.500" y="233.500" width="32" height="12" fill="none" stroke="#f01010" />
    <PriceBoxText x="1026" y="243.500">19288</PriceBoxText>
    <rect x="520.500" y="424.500" width="31" height="12" fill="#a6a6a6" stroke="#f01010" />
    <PriceBoxText x="522" y="434.500">17903</PriceBoxText>

    {/* fib labels */}
    {fibs.map(([t, y]) => <FibText key={t} x="1322" y={y}>{t}</FibText>)}
    {tealFibs.map(([t, y]) => <FibText key={t} $teal x="1268" y={y}>{t}</FibText>)}

    {/* chart heading */}
    <path d="M8 79h7l-3.500 4z" fill="#2f4f4f" />
    <HeaderText x="20" y="86">IT40Cash,H4  20272 20277 20185 20229</HeaderText>
    <HeaderText x="10" y="99">1</HeaderText>
    <HeaderText x="24" y="99">1</HeaderText>
    <SignalText x="10" y="110">ForexCounterAttack (C) Signal</SignalText>
    <ScrawlText x="298" y="115" textLength="132" lengthAdjust="spacingAndGlyphs">IRONCLAV</ScrawlText>
    <BigPrice x="1137" y="422">20229</BigPrice>

    {/* pane rules */}
    {[74, 438, 441, 446, 453, 456, 542, 628, 640, 642, 661].map((y) => (
      <line key={y} x1="5" x2="1323" y1={y + 0.5} y2={y + 0.5} stroke="#2f4f4f" />
    ))}
    <line x1="5.500" x2="5.500" y1="74" y2="661" stroke="#2f4f4f" />
    <line x1="1323.500" x2="1323.500" y1="74" y2="661" stroke="#2f4f4f" />
    <Dash d="M5 539.500H1366M5 626.500H1366" color="#c8c8c8" dash="3 2" />

    {/* subwindow 2 */}
    <line x1="158" x2="1013" y1="460" y2="460" stroke="#00ff00" strokeWidth="2" />
    <g shapeRendering="crispEdges">
      {histBars.map((b) => (
        <rect key={b.x} x={b.x} y={b.h > 0 ? 495 - b.h : 495} width="3" height={Math.abs(b.h)} fill={b.c} />
      ))}
    </g>
    <line x1="158" x2="1014" y1="500.500" y2="500.500" stroke="#000" />
    <Poly pts={redOsc} color="#f01010" />
    <Poly pts={greenOsc} color="#9aff00" />
    <Dash d="M158 528H1013" color="#808080" w={2} dash="10 4" />
    <Dash d="M158 533H1013" color="#808080" w={2} dash="18 5" />
    {[row1, row2].map((row, i) => (
      <g key={i}>
        {row.g.map(([a, b]) => <line key={a} x1={a} x2={b} y1={528 + i * 5} y2={528 + i * 5} stroke="#7fff00" strokeWidth="2" />)}
        {row.r.map(([a, b]) => <line key={a} x1={a} x2={b} y1={528 + i * 5} y2={528 + i * 5} stroke="#ff0000" strokeWidth="2" />)}
      </g>
    ))}
    <HeaderText y="468">
      <tspan x="158">END - 2 0.0000 0.0000 51.9190 0.0000</tspan>
      <tspan x="327">ForexCounterAttack  Filten 0.0000</tspan>
      <tspan x="472">ForexCounterAttack  Filten 0.0000</tspan>
      <tspan x="643">index 1.0007 1.0000 0.9944</tspan>
    </HeaderText>
    <Poly pts={[[630,447],[800,457],[999,468]]} color="#000" w={4.500} />
    <ellipse cx="620" cy="460" rx="21" ry="15.500" stroke="#000" strokeWidth="4" fill="none" />

    {/* subwindow 3 */}
    <g shapeRendering="crispEdges">
      {volBars.map((b) => (
        <rect key={b.x} x={b.x} y={b.h > 0 ? 585 - b.h : 585} width="3" height={Math.abs(b.h)} fill="#d8d8d8" />
      ))}
      {orangeVol.map(([x, h]) => (
        <rect key={x} x={x} y={h > 0 ? 585 - h : 585} width="3" height={Math.abs(h)} fill="#d2691e" />
      ))}
    </g>
    <Poly pts={[[158,547],[620,547],[628,549],[635,547],[703,547],[720,548],[728,548],[730,622],[732,549],[738,547],[875,547],[878,550],[880,558],[882,549],[886,547],[1014,547]]} color="#ff0000" w={1.800} />
    <line x1="158" x2="1003" y1="552.500" y2="552.500" stroke="#1c7a1c" />
    <line x1="158" x2="1003" y1="618.500" y2="618.500" stroke="#cc2020" />
    <Dash d="M158 577.500H1003M158 593.500H1003" color="#2f4f4f" dash="4 3" />
    <line x1="158" x2="1323" y1="585.500" y2="585.500" stroke="#ffff00" />
    <HeaderText x="158" y="556">WOB</HeaderText>

    {/* subwindow 4 */}
    <g shapeRendering="crispEdges">
      {Array.from({ length: 214 }, (_, i) => 158 + 4 * i).map((x) => (
        <g key={x}>
          <rect x={x} y="630" width="3" height="3" fill={sq(sq1, x)} />
          <rect x={x} y="636" width="3" height="3" fill={sq(sq2, x)} />
        </g>
      ))}
    </g>

    {/* subwindow 5 */}
    <polyline points="158,652 555,652 561,661 567,652 622,652 627,645 632,652 722,652 727,645 732,652 880,652 885,645 890,652 1014,652" stroke="#000" strokeWidth="5" fill="none" />
    <polyline points="158,652 555,652 561,661 567,652 622,652 627,645 632,652 722,652 727,645 732,652 880,652 885,645 890,652 1014,652" stroke="#fff" strokeWidth="1" fill="none" />

    {/* right axis */}
    {axis.map(([t, y]) => (
      <g key={t}>
        <line x1="1323" x2="1327" y1={y + 0.5} y2={y + 0.5} stroke="#2f4f4f" />
        <AxisText x="1329" y={y + 3.5}>{t}</AxisText>
      </g>
    ))}
    <AxisText x="1329" y="107">20261</AxisText>
    <rect x="1324" y="105" width="34" height="11" fill="#2f4f4f" />
    <AxisText x="1329" y="114" style={{ fill: "#e0e0e0" }}>20229</AxisText>
    <AxisText x="1328" y="466">1.586</AxisText>
    <AxisText x="1328" y="538">1.2518</AxisText>
    <AxisText x="1328" y="553">1.6142</AxisText>
    <AxisText x="1328" y="625">0.6601</AxisText>
    <AxisText x="1328" y="637">0.20</AxisText>
    <AxisText x="1328" y="637">2.00</AxisText>
    <AxisText x="1328" y="654">100</AxisText>
    <AxisText x="1328" y="659">-100</AxisText>
    <rect x="1325" y="581" width="6" height="9" fill="#ffff00" />
    <AxisText x="1325.500" y="589" style={{ fill: "#556b00" }}>0</AxisText>

    {/* time axis */}
    {times.map((t, i) => (
      <g key={t}>
        <line x1={2.5 + i * 64} x2={2.5 + i * 64} y1="661" y2="665" stroke="#2f4f4f" />
        <AxisText x={4 + i * 64} y="676">{t}</AxisText>
      </g>
    ))}
  </ChartCanvas>
);

const tabs: [string, number][] = [
  ["US30Cash,Daily", 104], ["US500Cash,Daily", 108], ["US100Cash,H4", 100], ["GER30Cash,Daily", 112],
];
const tabsAfter: [string, number][] = [
  ["IT40Cash,Weekly", 112], ["IT40Cash,H4", 88], ["IT40Cash,Weekly", 112], ["IT40Cash,Daily", 100], ["IT40Cash,H1", 88], ["EU50Cash,Daily", 104], ["UK100Cash,Daily", 112],
];
const chevron = (up: boolean) => (
  <svg width="11" height="7" viewBox="0 0 11 7">
    <path d={up ? "M1 6l4.500-4.500L10 6" : "M1 1l4.500 4.500L10 1"} fill="none" stroke="#c0c0c0" strokeWidth="1.800" />
  </svg>
);
const chevronDark = (up: boolean) => (
  <svg width="9" height="6" viewBox="0 0 9 6">
    <path d={up ? "M1 5l3.500-3.500L8 5" : "M1 1l3.500 3.500L8 1"} fill="none" stroke="#444" strokeWidth="1.600" />
  </svg>
);
const statusCells: [string, number][] = [["Default", 115], ["", 102], ["", 72], ["", 71], ["", 67], ["", 71], ["", 70]];

export default function App() {
  return (
    <Page>
      <Global />
      <TitleBar>
        <AppLogo>XM</AppLogo>
        <TitleText>9063893: XMUK-Demo 2 - Conto dimostrativo (demo) - [IT40Cash,H4]</TitleText>
        <WinButton><svg width="11" height="11"><path d="M0 5.500h10" stroke="#fff" /></svg></WinButton>
        <WinButton><svg width="11" height="11"><path d="M2.500 2.500v-2h8v7h-2M.5 2.500h8v8h-8z" stroke="#fff" fill="none" /></svg></WinButton>
        <WinButton><svg width="11" height="11"><path d="M.5 .5l10 10M10.500 .5l-10 10" stroke="#fff" /></svg></WinButton>
      </TitleBar>
      <MenuBar>
        <MenuIcon>
          <svg width="16" height="16"><rect x="1.500" y="1.500" width="9" height="10" fill="#dbe8f8" stroke="#6a8fc0" /><rect x="5.500" y="5.500" width="9" height="9" fill="#eef4fc" stroke="#6a8fc0" /><path d="M7 12l2-3 2 2 2-3" stroke="#3a6ea5" fill="none" /></svg>
        </MenuIcon>
        <MenuItem $w={36}>File</MenuItem>
        <MenuItem $w={68}>Visualizza</MenuItem>
        <MenuItem $w={60}>Inserisci</MenuItem>
        <MenuItem $w={52}>Grafici</MenuItem>
        <MenuItem $w={70}>Strumenti</MenuItem>
        <MenuItem $w={59}>Finestra</MenuItem>
        <MenuItem $w={40}>Aiuto</MenuItem>
        <MdiGroup>
          <MdiButton><svg width="7" height="7"><path d="M1 5.500h5" stroke="#666" strokeWidth="2" /></svg></MdiButton>
          <MdiButton><svg width="9" height="9"><path d="M2.500 2v-1.500h6v5h-2M.5 2.500h6v6h-6z" stroke="#666" fill="none" /></svg></MdiButton>
          <MdiButton><svg width="9" height="9"><path d="M1 1l7 7M8 1l-7 7" stroke="#666" strokeWidth="1.800" /></svg></MdiButton>
        </MdiGroup>
      </MenuBar>
      <Toolbar>{slots.map(renderSlot)}</Toolbar>
      <ChartArea>
        <Chart />
        <Dialog>
          <DialogTitle>
            <HelpGlyph>?</HelpGlyph>
            <CloseGlyph><svg width="11" height="11"><path d="M.5 .5l10 10M10.500 .5l-10 10" stroke="#8a8a8a" /></svg></CloseGlyph>
          </DialogTitle>
          <MessageRow>
            <MessageText><span>Pattern Bearish A Crab</span></MessageText>
            <MessageScroll>{chevron(true)}{chevron(false)}</MessageScroll>
          </MessageRow>
          <ListBox>
            <ListRows>
              {[true, false, true, false].map((odd, i) => (
                <ListRow key={i} $odd={odd}><span>Pattern Bearish A Crab</span></ListRow>
              ))}
            </ListRows>
            <ListScroll>
              {chevronDark(true)}
              <ListThumb />
              {chevronDark(false)}
            </ListScroll>
          </ListBox>
          <DialogButton />
        </Dialog>
      </ChartArea>
      <TabBar>
        {tabs.map(([t, w]) => <Tab key={t} $w={w}>{t}</Tab>)}
        <Tab $active $w={88}>IT40Cash,H4</Tab>
        {tabsAfter.map(([t, w], i) => <Tab key={i} $w={w}>{t}</Tab>)}
        <LastTab $w={100}>FRA40Cash,Daily</LastTab>
        <TabArrows><TabArrow $dir="l" /><TabArrow $dir="r" $on /></TabArrows>
      </TabBar>
      <StatusBar>
        <StatusCell $w={673} $plain>Per aiuto, premi F1</StatusCell>
        {statusCells.map(([t, w], i) => <StatusCell key={i} $w={w}>{t}</StatusCell>)}
        <StatusCell $w={125}>
          <svg width="23" height="14">
            {Array.from({ length: 8 }, (_, i) => (
              <g key={i}>
                <rect x={i * 3} y={0} width="2" height="14" fill={i < 5 ? "#7a8a10" : "#f0f0f0"} />
                <rect x={i * 3} y={7 - i * 0.7} width="2" height={7 + i * 0.7} fill="#205a7a" />
              </g>
            ))}
          </svg>
          6741/5 kb
        </StatusCell>
      </StatusBar>
    </Page>
  );
}
